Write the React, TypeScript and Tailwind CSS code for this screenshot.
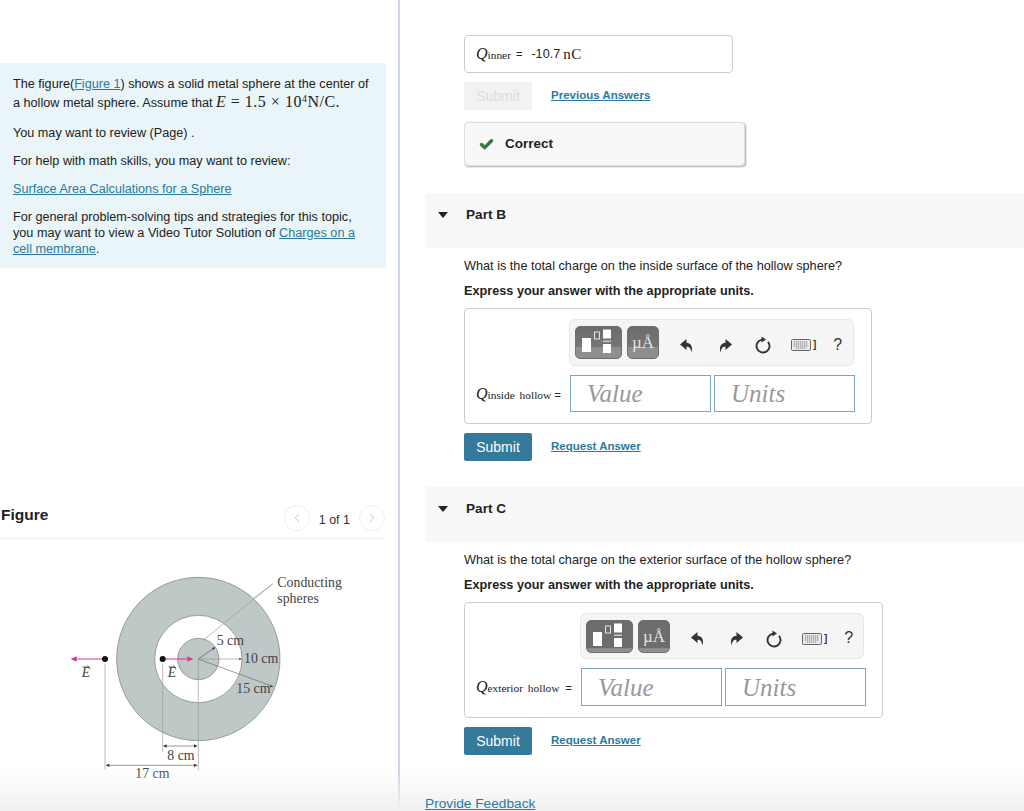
import { Check, ChevronLeft, ChevronRight } from "lucide-react";

const sans = "font-['Liberation_Sans',Arial,sans-serif]";
const serif = "font-['Liberation_Serif','Times_New_Roman',serif]";

function TemplateIcon() {
  return (
    <svg width="45" height="31" viewBox="0 0 45 31" className="block">
      <rect x="6" y="11" width="9" height="14" fill="#fff" />
      <rect x="18.500" y="5" width="5" height="7" fill="none" stroke="#fff" strokeWidth="0.800" />
      <rect x="27" y="2.500" width="8" height="9" fill="#fff" />
      <rect x="27" y="13.500" width="8" height="1.600" fill="#c8c8c8" />
      <rect x="27" y="17" width="8" height="9" fill="#fff" />
    </svg>
  );
}

function GreyButton({ children, width, band }: { children: React.ReactNode; width: string; band: string }) {
  return (
    <div
      className={`${width} ${band} flex h-[33px] items-center justify-center overflow-hidden rounded-[5px] border border-[#6e6e6e]`}
    >
      {children}
    </div>
  );
}

function Toolbar({ size, band }: { size: string; band: string }) {
  return (
    <div className={`${size} flex items-center rounded-[6px] border border-[#e8e8e8] bg-[#f5f5f5] pl-[5px]`}>
      <GreyButton width="w-[47px]" band={band}>
        <TemplateIcon />
      </GreyButton>
      <div className="ml-[5px]">
        <GreyButton width="w-[32px]" band={band}>
          <span className={`${serif} text-[17px] leading-none text-[#e4e4e4]`}>
            µÅ
          </span>
        </GreyButton>
      </div>
      <svg width="16" height="16" viewBox="0 0 16 16" className="ml-[20px] mt-[6px] fill-[#333]">
        <path d="M7.500 1 1 6.500 7.500 12V8.800c3-.2 4.200 1.500 5 5.700 1.500-5.500-.3-9.300-5-9.700V1Z" />
      </svg>
      <svg width="16" height="16" viewBox="0 0 16 16" className="ml-[22px] mt-[6px] fill-[#333]">
        <path d="M8.500 1 15 6.500 8.500 12V8.800c-3-.2-4.200 1.500-5 5.700-1.500-5.500.3-9.300 5-9.700V1Z" />
      </svg>
      <svg width="18" height="18" viewBox="0 0 18 18" className="ml-[21px] mt-[5px] fill-none stroke-[#333]">
        <path d="M14 5.800A6.500 6.500 0 1 1 8 3.600" strokeWidth="1.900" />
        <path d="M7.500 0.500 12 3.500 7.500 6.500z" fill="#333" stroke="none" />
      </svg>
      <svg width="20" height="12" viewBox="0 0 20 12" className="ml-[19px] mt-[5px]">
        <rect x="0.500" y="0.500" width="19" height="11" rx="1" fill="#e8e8e8" stroke="#666" />
        <path d="M3 3h14M3 5h14M3 7h14M5 9h10" stroke="#777" strokeDasharray="1.200 0.800" />
      </svg>
      <span className={`${sans} ml-[2px] mt-[5px] text-[10px] font-bold leading-none text-[#333]`}>]</span>
      <span className={`${sans} ml-[17px] mt-[4px] text-[16px] leading-none text-[#333]`}>?</span>
    </div>
  );
}

function AnswerInput({ placeholder, height }: { placeholder: string; height: string }) {
  return (
    <div className={`${height} flex w-[141px] items-center border border-[#7ba6bd] pl-[16px]`}>
      <span className={`${serif} text-[25px] italic leading-none text-[#999]`}>{placeholder}</span>
    </div>
  );
}

function PartSection({
  title,
  question,
  subscript,
  boxWidth,
  labelWidth,
  toolbarPad,
  toolbarSize,
  band,
  inputHeight,
}: {
  title: string;
  question: string;
  subscript: string;
  boxWidth: string;
  labelWidth: string;
  toolbarPad: string;
  toolbarSize: string;
  band: string;
  inputHeight: string;
}) {
  return (
    <section>
      <div className="ml-[25px] flex h-[55px] bg-[#f8f8f8] pl-[13px] pt-[14px]">
        <div className="mt-[5px] h-0 w-0 border-x-[5.500px] border-t-[6px] border-x-transparent border-t-[#222]" />
        <h2 className="ml-[18px] text-[13.600px] font-bold leading-[15px] text-[#222]">{title}</h2>
      </div>
      <div className="pl-[64px]">
        <p className="mt-[10px] text-[12.700px] leading-[16px] text-[#222]">{question}</p>
        <p className="mt-[9px] text-[12.700px] font-bold leading-[16px] text-[#222]">
          Express your answer with the appropriate units.
        </p>
        <div className={`${boxWidth} mt-[9px] h-[116px] rounded-[4px] border border-[#ccc] pt-[10px]`}>
          <div className={`${toolbarPad} flex justify-end`}>
            <Toolbar size={toolbarSize} band={band} />
          </div>
          <div className="mt-[9px] flex items-center">
            <div className={`${labelWidth} flex items-baseline justify-between pl-[11px] pr-[9px] text-[#222]`}>
              <span>
                <span className={`${serif} text-[16px] italic`}>Q</span>
                <span className={`${serif} text-[11.400px] [word-spacing:2px]`}>{subscript}</span>
              </span>
              <span className="text-[11px]">=</span>
            </div>
            <AnswerInput placeholder="Value" height={inputHeight} />
            <div className="ml-[3px]">
              <AnswerInput placeholder="Units" height={inputHeight} />
            </div>
          </div>
        </div>
        <div className="mt-[9px] flex items-center">
          <button className="h-[28px] w-[68px] rounded-[2px] bg-[#337a9b] text-[14px] text-white">Submit</button>
          <a className="ml-[19px] text-[11.500px] font-bold text-[#2a7a9f] underline">Request Answer</a>
        </div>
      </div>
    </section>
  );
}

function FigureDiagram() {
  return (
    <svg width="310" height="230" viewBox="0 0 930 690" className="ml-[50px] mt-[21px] block">
      <circle cx="445" cy="297" r="245" fill="#bdc8c7" stroke="#777" strokeWidth="2" />
      <circle cx="445" cy="297" r="131" fill="#fff" stroke="#777" strokeWidth="2" />
      <circle cx="445" cy="297" r="62" fill="#bdc8c7" stroke="#777" strokeWidth="2" />
      <g stroke="#999" strokeWidth="2" fill="none">
        <path d="M445 297 H575" />
        <path d="M445 297 L670 380" stroke="#666" />
        <path d="M445 297 L495 262" stroke="#555" />
        <path d="M445 297 V630" />
        <path d="M338 310 V575" />
        <path d="M165 310 V630" />
        <path d="M460 240 L668 72 M610 115 L668 72" />
        <path d="M340 558 H442" stroke="#666" />
        <path d="M168 616 H442" stroke="#666" />
      </g>
      <g fill="#333">
        <path d="M340 558l10-5v10zM442 558l-10-5v10zM168 616l10-5v10zM442 616l-10-5v10z" />
        <path d="M495 262l-9 2 5 6zM575 297l-7-4v8zM670 380l-9-5-1 7z" />
      </g>
      <path d="M78 297 H160 M345 297 H415" stroke="#d4388f" strokeWidth="3" />
      <path d="M62 297l18-8v16zM430 297l-18-8v16z" fill="#d4388f" />
      <circle cx="165" cy="297" r="9" fill="#111" />
      <circle cx="338" cy="297" r="9" fill="#111" />
      <g className={serif} fontSize="41.500" fill="#444">
        <text x="682" y="82">Conducting</text>
        <text x="682" y="129">spheres</text>
        <text x="500" y="256">5 cm</text>
        <text x="582" y="310">10 cm</text>
        <text x="559" y="398">15 cm</text>
        <text x="352" y="600">8 cm</text>
        <text x="256" y="655">17 cm</text>
        <text x="95" y="352" fontStyle="italic">E</text>
        <text x="353" y="352" fontStyle="italic">E</text>
      </g>
      <path d="M97 320h20M111 316l6 4-6 4M355 320h20M369 316l6 4-6 4" stroke="#444" strokeWidth="1.500" fill="none" />
    </svg>
  );
}

export default function App() {
  return (
    <div className={`${sans} relative flex h-[811px] w-[1024px] overflow-hidden bg-white`}>
      <aside className="h-full w-[400px] shrink-0 border-r-2 border-[#ccd6e6] pt-[63px]">
        <div className="h-[205px] w-[386px] bg-[#e9f5f8] pl-[13px] pr-[14px] pt-[12px] text-[12.650px] leading-[16px] text-[#222]">
          <p className="leading-[18px]">
            The figure(<a className="text-[#2a7a9f] underline">Figure 1</a>) shows a solid metal sphere at the center of
            a hollow metal sphere. Assume that{" "}
            <span className={`${serif} text-[16px] tracking-[0.5px]`}>
              <i>E</i> = 1.5 × 10<sup className="text-[10px] leading-none">4</sup>N/C.
            </span>
          </p>
          <p className="mt-[13px]">You may want to review (Page) .</p>
          <p className="mt-[12px]">For help with math skills, you may want to review:</p>
          <p className="mt-[12px]">
            <a className="text-[#2a7a9f] underline">Surface Area Calculations for a Sphere</a>
          </p>
          <p className="mt-[12px]">
            For general problem-solving tips and strategies for this topic, you may want to view a Video Tutor Solution of{" "}
            <a className="text-[#2a7a9f] underline">Charges on a cell membrane</a>.
          </p>
        </div>
        <div className="mt-[237px] flex h-[34px] w-[386px] items-start justify-between border-b border-[#eee] pr-[1px]">
          <h2 className="mt-[1px] pl-[1px] text-[15.500px] font-bold leading-[18px] text-[#222]">Figure</h2>
          <div className="flex items-center">
            <div className="flex h-[26px] w-[26px] items-center justify-center rounded-full border border-[#eee]">
              <ChevronLeft size={14} strokeWidth={1.500} className="text-[#bbb]" />
            </div>
            <span className="mx-[9px] mt-[3px] text-[12.500px] leading-[20px] text-[#333]">1 of 1</span>
            <div className="flex h-[26px] w-[26px] items-center justify-center rounded-full border border-[#eee]">
              <ChevronRight size={14} strokeWidth={1.500} className="text-[#bbb]" />
            </div>
          </div>
        </div>
        <FigureDiagram />
      </aside>

      <main className="min-w-0 flex-1 pt-[35px]">
        <div className="pl-[64px]">
          <div className="flex h-[38px] w-[269px] items-center rounded-[4px] border border-[#ccc] pl-[11px] text-[#222]">
            <span className={`${serif} text-[16px] italic`}>Q</span>
            <span className={`${serif} mt-[4px] text-[11.400px]`}>inner</span>
            <span className="ml-[5px] text-[11px]">=</span>
            <span className="ml-[9px] text-[12.650px]">-10.7</span>
            <span className={`${serif} ml-[3px] text-[15px] tracking-[0.5px]`}>nC</span>
          </div>
          <div className="mt-[9px] flex items-center">
            <button className="h-[28px] w-[68px] rounded-[2px] bg-[#f2f2f2] text-[14px] text-[#ddd]">Submit</button>
            <a className="ml-[19px] text-[11.500px] font-bold text-[#2a7a9f] underline">Previous Answers</a>
          </div>
          <div className="mt-[12px] flex h-[44px] w-[281px] items-center rounded-[4px] border border-[#ddd] bg-[#f8f8f8] pl-[14px] shadow-[1px_1px_2px_#aaa]">
            <Check size={15} strokeWidth={5.500} className="text-[#2e7d3e]" />
            <span className="ml-[11px] text-[13.500px] font-bold text-[#222]">Correct</span>
          </div>
        </div>

        <div className="mt-[27px]">
          <PartSection
            title="Part B"
            question="What is the total charge on the inside surface of the hollow sphere?"
            subscript="inside hollow"
            boxWidth="w-[408px]"
            labelWidth="w-[105px]"
            toolbarPad="pr-[17px]"
            toolbarSize="h-[47px] w-[285px]"
            band="bg-[linear-gradient(#6c6c6c_0%,#757575_63%,#8f8f8f_65%,#8f8f8f_100%)]"
            inputHeight="h-[37px]"
          />
        </div>
        <div className="mt-[26px]">
          <PartSection
            title="Part C"
            question="What is the total charge on the exterior surface of the hollow sphere?"
            subscript="exterior hollow"
            boxWidth="w-[419px]"
            labelWidth="w-[116px]"
            toolbarPad="pr-[18px]"
            toolbarSize="h-[46px] w-[284px]"
            band="bg-[linear-gradient(#6c6c6c_0%,#6c6c6c_87%,#8f8f8f_89%,#8f8f8f_100%)]"
            inputHeight="h-[38px]"
          />
        </div>
        <a className="relative z-10 ml-[25px] mt-[41px] block text-[13.700px] leading-[16px] text-[#2a7a9f] underline">
          Provide Feedback
        </a>
      </main>

      <div className="pointer-events-none absolute inset-x-0 bottom-0 h-[41px] bg-gradient-to-b from-white/0 to-[#f0f0f0]" />
    </div>
  );
}
